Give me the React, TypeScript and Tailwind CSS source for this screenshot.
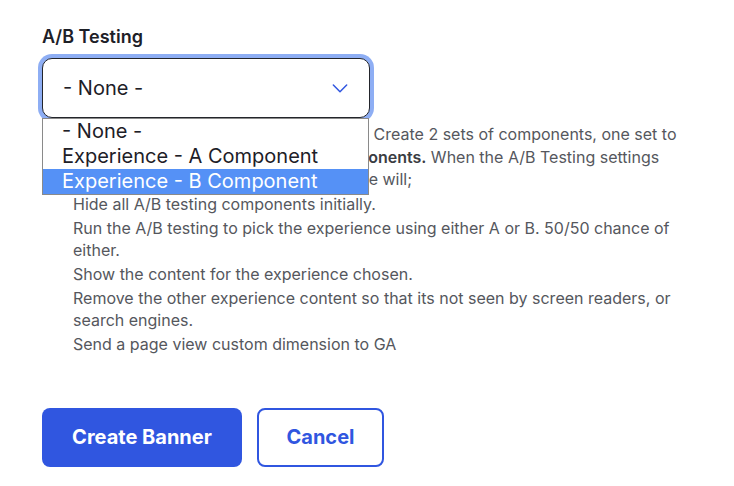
import React from 'react';

const steps = [
  'Hide all A/B testing components initially.',
  'Run the A/B testing to pick the experience using either A or B. 50/50 chance of either.',
  'Show the content for the experience chosen.',
  'Remove the other experience content so that its not seen by screen readers, or search engines.',
  'Send a page view custom dimension to GA',
];

const options = ['- None -', 'Experience - A Component', 'Experience - B Component'];

const App: React.FC = () => {
  return (
    <div className="min-h-screen bg-white px-[42px] pt-[26px] font-['Inter',sans-serif]">
      <label className="block text-[18px] font-semibold leading-[22px] text-[#1d2027]">A/B Testing</label>

      <div className="relative mt-[10px] w-[328px]">
        <div className="flex h-[60px] items-center justify-between rounded-[10px] border border-[#23252b] bg-white pl-[20px] pr-[19px] shadow-[0_0_0_4px_#8eaef4]">
          <span className="text-[20px] text-[#1d2027]">- None -</span>
          <svg width="20" height="20" viewBox="0 0 24 24" fill="none" stroke="#3056e0" strokeWidth="1.8" strokeLinecap="round" strokeLinejoin="round">
            <path d="M4 8.5l8 8 8-8" />
          </svg>
        </div>

        {/* open option list */}
        <div className="absolute left-0 top-full z-10 w-[327px] border border-[#8a8a8a] bg-white">
          {options.map((o, i) => (
            <div
              key={o}
              className={
                i === 2
                  ? 'h-[25px] pl-[19px] text-[20px] leading-[25px] text-white bg-[#5591f6]'
                  : 'h-[25px] pl-[19px] text-[20px] leading-[25px] text-[#1d2027]'
              }
            >
              {o}
            </div>
          ))}
        </div>
      </div>

      <p className="mt-[5px] whitespace-nowrap text-[16px] leading-[22.5px] text-[#55575d]">
        Pick the experience this banner belongs to. Create 2 sets of components, one set to
        <br />
        use A Components, the other uses <b className="font-semibold text-[#3a3c42]">B Components.</b> When the A/B Testing settings
        <br />
        are switched on and a visitor views the page will;
      </p>
      <ul className="mt-[2px] flex flex-col gap-[2px] pl-[31px] pr-[20px] text-[16px] leading-[22px] text-[#55575d]">
        {steps.map((s) => (
          <li key={s}>{s}</li>
        ))}
      </ul>

      <div className="mt-[53px] flex gap-[15px]">
        <button className="h-[59px] w-[200px] rounded-[8px] bg-[#3056e0] text-[20px] font-bold text-white">
          Create Banner
        </button>
        <button className="h-[59px] w-[127px] rounded-[8px] border-2 border-[#3056e0] bg-white text-[20px] font-bold text-[#3056e0]">
          Cancel
        </button>
      </div>
    </div>
  );
};

export default App;
